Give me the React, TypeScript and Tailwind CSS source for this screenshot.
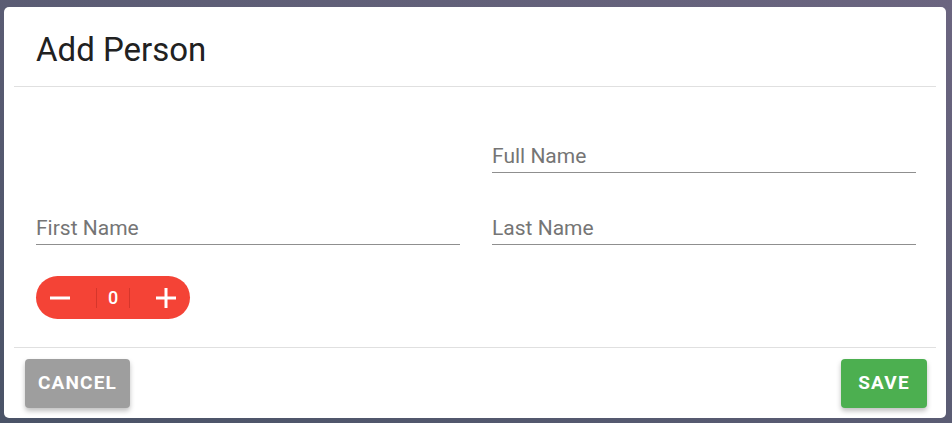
import React, { useState } from 'react';

const Field = ({ label }: { label: string }) => {
  return (
    <div className="w-full border-b border-[#8f8f8f] pb-[3px]">
      <div className="text-[21px] leading-[26px] text-[#757575]">{label}</div>
    </div>
  );
};

const App = () => {
  const [count, setCount] = useState(0);

  return (
    <div
      className="h-[423px] w-[952px] overflow-hidden bg-linear-to-tr from-[#4a5367] to-[#6b6580] pl-[4px] pt-[7px]"
      style={{ fontFamily: 'Roboto, "Liberation Sans", sans-serif' }}
    >
      <div className="flex h-[411px] w-[942px] flex-col rounded-[5px] bg-white">
        {/* header */}
        <div className="mx-[10px] flex h-[80px] items-center border-b border-[#e0e0e0] px-[22px] pt-[6px]">
          <h2 className="text-[33px] font-normal text-[#212121]">Add Person</h2>
        </div>

        {/* body */}
        <div className="flex flex-1 flex-col pl-[32px] pr-[30px] pt-[56px]">
          <div className="grid grid-cols-2 gap-x-[32px] gap-y-[42px]">
            <div />
            <Field label="Full Name" />
            <Field label="First Name" />
            <Field label="Last Name" />
          </div>

          <div className="mt-[31px] flex h-[43px] w-[154px] items-center rounded-full bg-[#f44336] text-white">
            <button
              className="flex h-full w-[60px] items-center pl-[14px]"
              onClick={() => setCount(count - 1)}
            >
              <svg width="20" height="20" viewBox="0 0 20 20">
                <rect x="0" y="8.5" width="20" height="3" fill="white" />
              </svg>
            </button>
            <div className="h-[20px] w-px bg-[#d6362b]" />
            <div className="w-[32px] text-center text-[18px] font-medium">{count}</div>
            <div className="h-[20px] w-px bg-[#d6362b]" />
            <button
              className="flex h-full flex-1 items-center pl-[26px]"
              onClick={() => setCount(count + 1)}
            >
              <svg width="20" height="20" viewBox="0 0 20 20">
                <rect x="0" y="8.5" width="20" height="3" fill="white" />
                <rect x="8.5" y="0" width="3" height="20" fill="white" />
              </svg>
            </button>
          </div>
        </div>

        {/* footer */}
        <div className="mx-[10px] flex items-center justify-between border-t border-[#e0e0e0] pb-[10px] pl-[11px] pr-[9px] pt-[11px]">
          <button className="flex h-[49px] w-[105px] items-center justify-center rounded-[4px] bg-[#9e9e9e] text-[19px] font-bold tracking-[1.2px] text-white shadow-[0_3px_5px_rgba(0,0,0,0.25)]">
            CANCEL
          </button>
          <button className="flex h-[49px] w-[86px] items-center justify-center rounded-[4px] bg-[#4caf50] text-[19px] font-bold tracking-[1.2px] text-white shadow-[0_3px_5px_rgba(0,0,0,0.25)]">
            SAVE
          </button>
        </div>
      </div>
    </div>
  );
};

export default App;
